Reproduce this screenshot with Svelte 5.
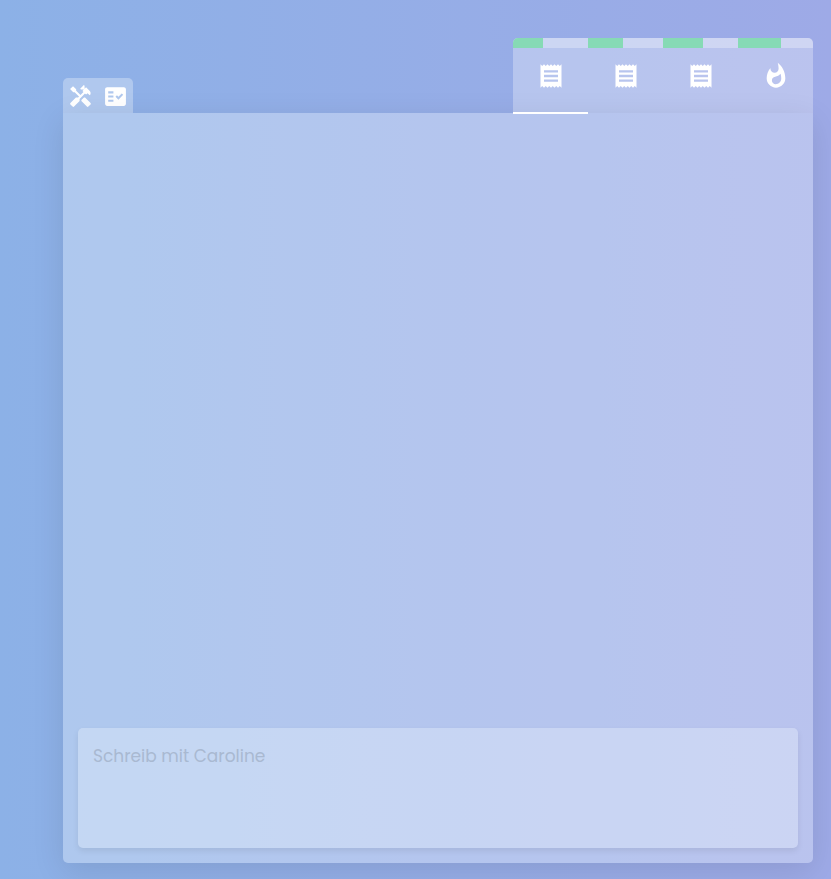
<script>
  const receipt =
    'M18 17H6v-2h12v2zm0-4H6v-2h12v2zm0-4H6V7h12v2zM3 22l1.5-1.5L6 22l1.5-1.5L9 22l1.5-1.5L12 22l1.5-1.5L15 22l1.5-1.5L18 22l1.5-1.5L21 22V2l-1.5 1.5L18 2l-1.5 1.5L15 2l-1.5 1.5L12 2l-1.5 1.5L9 2 7.5 3.5 6 2 4.5 3.5 3 2v20z';
  const flame =
    'M13.5.67s.74 2.65.74 4.8c0 2.06-1.35 3.73-3.41 3.73-2.07 0-3.63-1.67-3.63-3.73l.03-.36C5.21 7.51 4 10.62 4 14c0 4.42 3.58 8 8 8s8-3.58 8-8C20 8.61 17.41 3.8 13.5.67zM11.71 19c-1.78 0-3.22-1.4-3.22-3.14 0-1.62 1.05-2.76 2.81-3.12 1.77-.36 3.6-1.21 4.62-2.58.39 1.29.59 2.65.59 4.04 0 2.65-2.15 4.8-4.8 4.8z';

  const tools = [
    {
      label: 'Werkzeuge',
      path: 'M21.67 18.17l-5.3-5.3h-.99l-2.54 2.54v.99l5.3 5.3c.39.39 1.02.39 1.41 0l2.12-2.12c.39-.38.39-1.02 0-1.41zM17.34 10.19l1.41-1.41 2.12 2.12c1.17-1.17 1.17-3.07 0-4.24l-3.54-3.54-1.41 1.41V1.71L15.22 1l-3.54 3.54.71.71h2.83l-1.41 1.41 1.06 1.06-2.89 2.89-4.13-4.13V5.06L4.83 2.04 2 4.87 5.03 7.9h1.41l4.13 4.13-.85.85H7.6l-5.3 5.3c-.39.39-.39 1.02 0 1.41l2.12 2.12c.39.39 1.02.39 1.41 0l5.3-5.3v-2.12l5.15-5.15 1.05 1.05z'
    },
    {
      label: 'Aufgaben',
      path: 'M20 3H4c-1.1 0-2 .9-2 2v14c0 1.1.9 2 2 2h16c1.1 0 2-.9 2-2V5c0-1.1-.9-2-2-2zM10 17H5v-2h5v2zm0-4H5v-2h5v2zm0-4H5V7h5v2zm4.82 6L12 12.16l1.41-1.41 1.41 1.42L17.99 9l1.42 1.42L14.82 15z'
    }
  ];

  const tabs = [
    { label: 'Notiz 1', path: receipt, progress: 40 },
    { label: 'Notiz 2', path: receipt, progress: 47 },
    { label: 'Notiz 3', path: receipt, progress: 53 },
    { label: 'Aktuell', path: flame, progress: 57 }
  ];

  let active = $state(0);
  let message = $state('');
</script>

<div class="page">
  <header>
    <nav class="tools" aria-label="Werkzeuge">
      {#each tools as tool}
        <button class="tool" type="button" aria-label={tool.label}>
          <svg viewBox="0 0 24 24" aria-hidden="true"><path d={tool.path} /></svg>
        </button>
      {/each}
    </nav>

    <div class="tabs" role="tablist">
      {#each tabs as tab, i}
        <button
          class="tab"
          class:active={active === i}
          type="button"
          role="tab"
          aria-label={tab.label}
          aria-selected={active === i}
          onclick={() => (active = i)}
        >
          <span class="track"><span class="fill" style="width: {tab.progress}%"></span></span>
          <span class="icon">
            <svg viewBox="0 0 24 24" aria-hidden="true"><path d={tab.path} /></svg>
          </span>
        </button>
      {/each}
    </div>
  </header>

  <main>
    <section class="messages" aria-live="polite"></section>
    <textarea
      aria-label="Schreib mit Caroline"
      placeholder="Schreib mit Caroline"
      bind:value={message}
    ></textarea>
  </main>
</div>

<style>
  :global(body) {
    margin: 0;
  }

  .page {
    display: flex;
    flex-direction: column;
    box-sizing: border-box;
    min-height: 100vh;
    padding: 38px 18px 16px 63px;
    overflow: hidden;
    background: linear-gradient(to right, #8cb1e7, #9eaae7);
    font-family: Poppins, Inter, sans-serif;
  }

  header {
    display: flex;
    align-items: flex-end;
    justify-content: space-between;
  }

  button {
    margin: 0;
    padding: 0;
    border: 0;
    background: none;
    color: #fff;
    cursor: pointer;
  }

  svg {
    display: block;
    fill: currentColor;
  }

  .tools,
  .tabs {
    display: flex;
    border-radius: 5px 5px 0 0;
    background: rgba(255, 255, 255, 0.3);
  }

  .tool {
    padding: 6px 5px 4px;
  }

  .tool svg {
    width: 25px;
    height: 25px;
  }

  .tab {
    display: flex;
    flex-direction: column;
    width: 75px;
    height: 75px;
  }

  .tab:first-child .track {
    border-top-left-radius: 5px;
  }

  .tab:last-child .track {
    border-top-right-radius: 5px;
  }

  .track {
    width: 100%;
    height: 10px;
    overflow: hidden;
    background: rgba(255, 255, 255, 0.3);
  }

  .fill {
    display: block;
    height: 100%;
    background: #86dab5;
  }

  .icon {
    flex: 1;
    align-self: center;
    padding-top: 14px;
  }

  .icon svg {
    width: 28px;
    height: 28px;
  }

  .tab.active::after {
    content: '';
    position: relative;
    width: 100%;
    height: 2px;
    margin-bottom: -1px;
    background: #fff;
  }

  main {
    display: flex;
    flex: 1;
    flex-direction: column;
    padding: 15px;
    border-radius: 0 0 5px 5px;
    background: rgba(252, 255, 255, 0.3);
    box-shadow: 0 8px 32px rgba(0, 0, 0, 0.1);
  }

  .messages {
    flex: 1;
  }

  textarea {
    box-sizing: border-box;
    width: 100%;
    height: 120px;
    padding: 15px;
    border: 0;
    border-radius: 5px;
    outline: 0;
    resize: none;
    background: rgba(244, 252, 255, 0.3);
    box-shadow: 0 3px 6px rgba(0, 0, 0, 0.08);
    color: #5f7190;
    font-family: inherit;
    font-size: 17px;
    line-height: 26px;
  }

  textarea::placeholder {
    color: #a9b9d1;
    opacity: 1;
  }
</style>
